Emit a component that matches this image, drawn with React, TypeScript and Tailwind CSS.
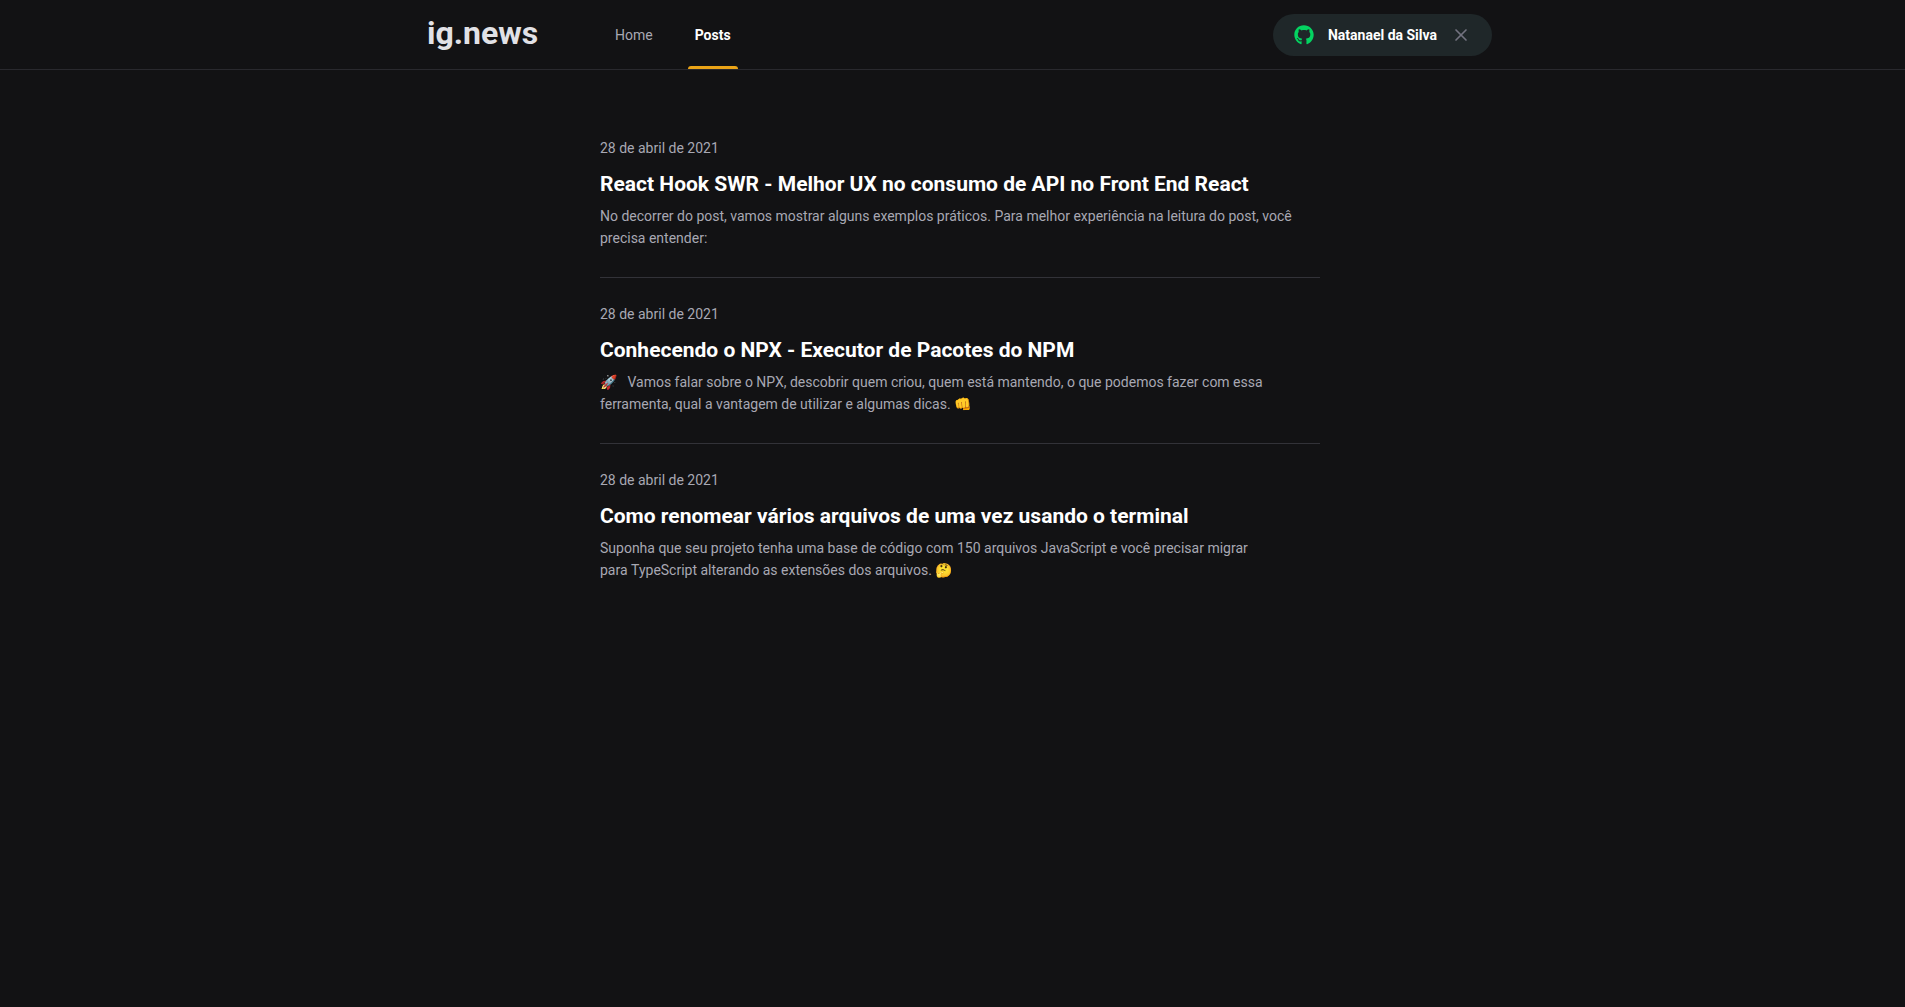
import { FaGithub } from "react-icons/fa";
import { FiX } from "react-icons/fi";

const posts = [
  {
    title: "React Hook SWR - Melhor UX no consumo de API no Front End React",
    text: "No decorrer do post, vamos mostrar alguns exemplos práticos. Para melhor experiência na leitura do post, você precisa entender:",
  },
  {
    title: "Conhecendo o NPX - Executor de Pacotes do NPM",
    text: "🚀 \u00a0 Vamos falar sobre o NPX, descobrir quem criou, quem está mantendo, o que podemos fazer com essa ferramenta, qual a vantagem de utilizar e algumas dicas. 👊",
  },
  {
    title: "Como renomear vários arquivos de uma vez usando o terminal",
    text: "Suponha que seu projeto tenha uma base de código com 150 arquivos JavaScript e você precisar migrar para\u00a0TypeScript alterando as extensões dos arquivos. 🤔",
  },
];

export default function App() {
  return (
    <div className="h-screen overflow-hidden bg-[#121214] font-['Roboto',sans-serif] text-[14px] text-white">
      <div className="w-[1920px]">
        <header className="h-[70px] border-b border-[#29292e]">
          <div className="mx-auto flex h-[69px] w-[1120px] items-center px-7">
            <div className="-mt-[3px] -ml-px w-[110px] text-[32px] leading-none font-bold text-[#e1e1e6]">ig.news</div>
            <nav className="ml-[78px] flex h-[69px] gap-[42px] leading-[70px]">
              <a className="text-[#a8a8b3]">Home</a>
              <a className="relative font-bold after:absolute after:-left-[7px] after:-right-[7px] after:bottom-0 after:h-[3px] after:rounded-t-[3px] after:bg-[#eba417] after:content-['']">Posts</a>
            </nav>
            <button className="mt-px ml-auto flex h-[42px] items-center rounded-full bg-[#1f2729] px-[21px] font-bold">
              <FaGithub className="mr-3.5 size-5 text-[#04d361]" />
              Natanael da Silva
              <FiX className="ml-3.5 size-5 text-[#737380]" />
            </button>
          </div>
        </header>
        <main className="mx-auto mt-[70px] w-[720px]">
          {posts.map((post) => (
            <article key={post.title} className="border-[#323238] not-first:mt-7 not-first:border-t not-first:pt-7">
              <time className="block leading-4 text-[#a8a8b3]">28 de abril de 2021</time>
              <strong className="mt-3.5 block text-[21px] leading-7 font-bold">{post.title}</strong>
              <p className="mt-[7px] leading-[22px] text-[#a8a8b3]">{post.text}</p>
            </article>
          ))}
        </main>
      </div>
    </div>
  );
}
